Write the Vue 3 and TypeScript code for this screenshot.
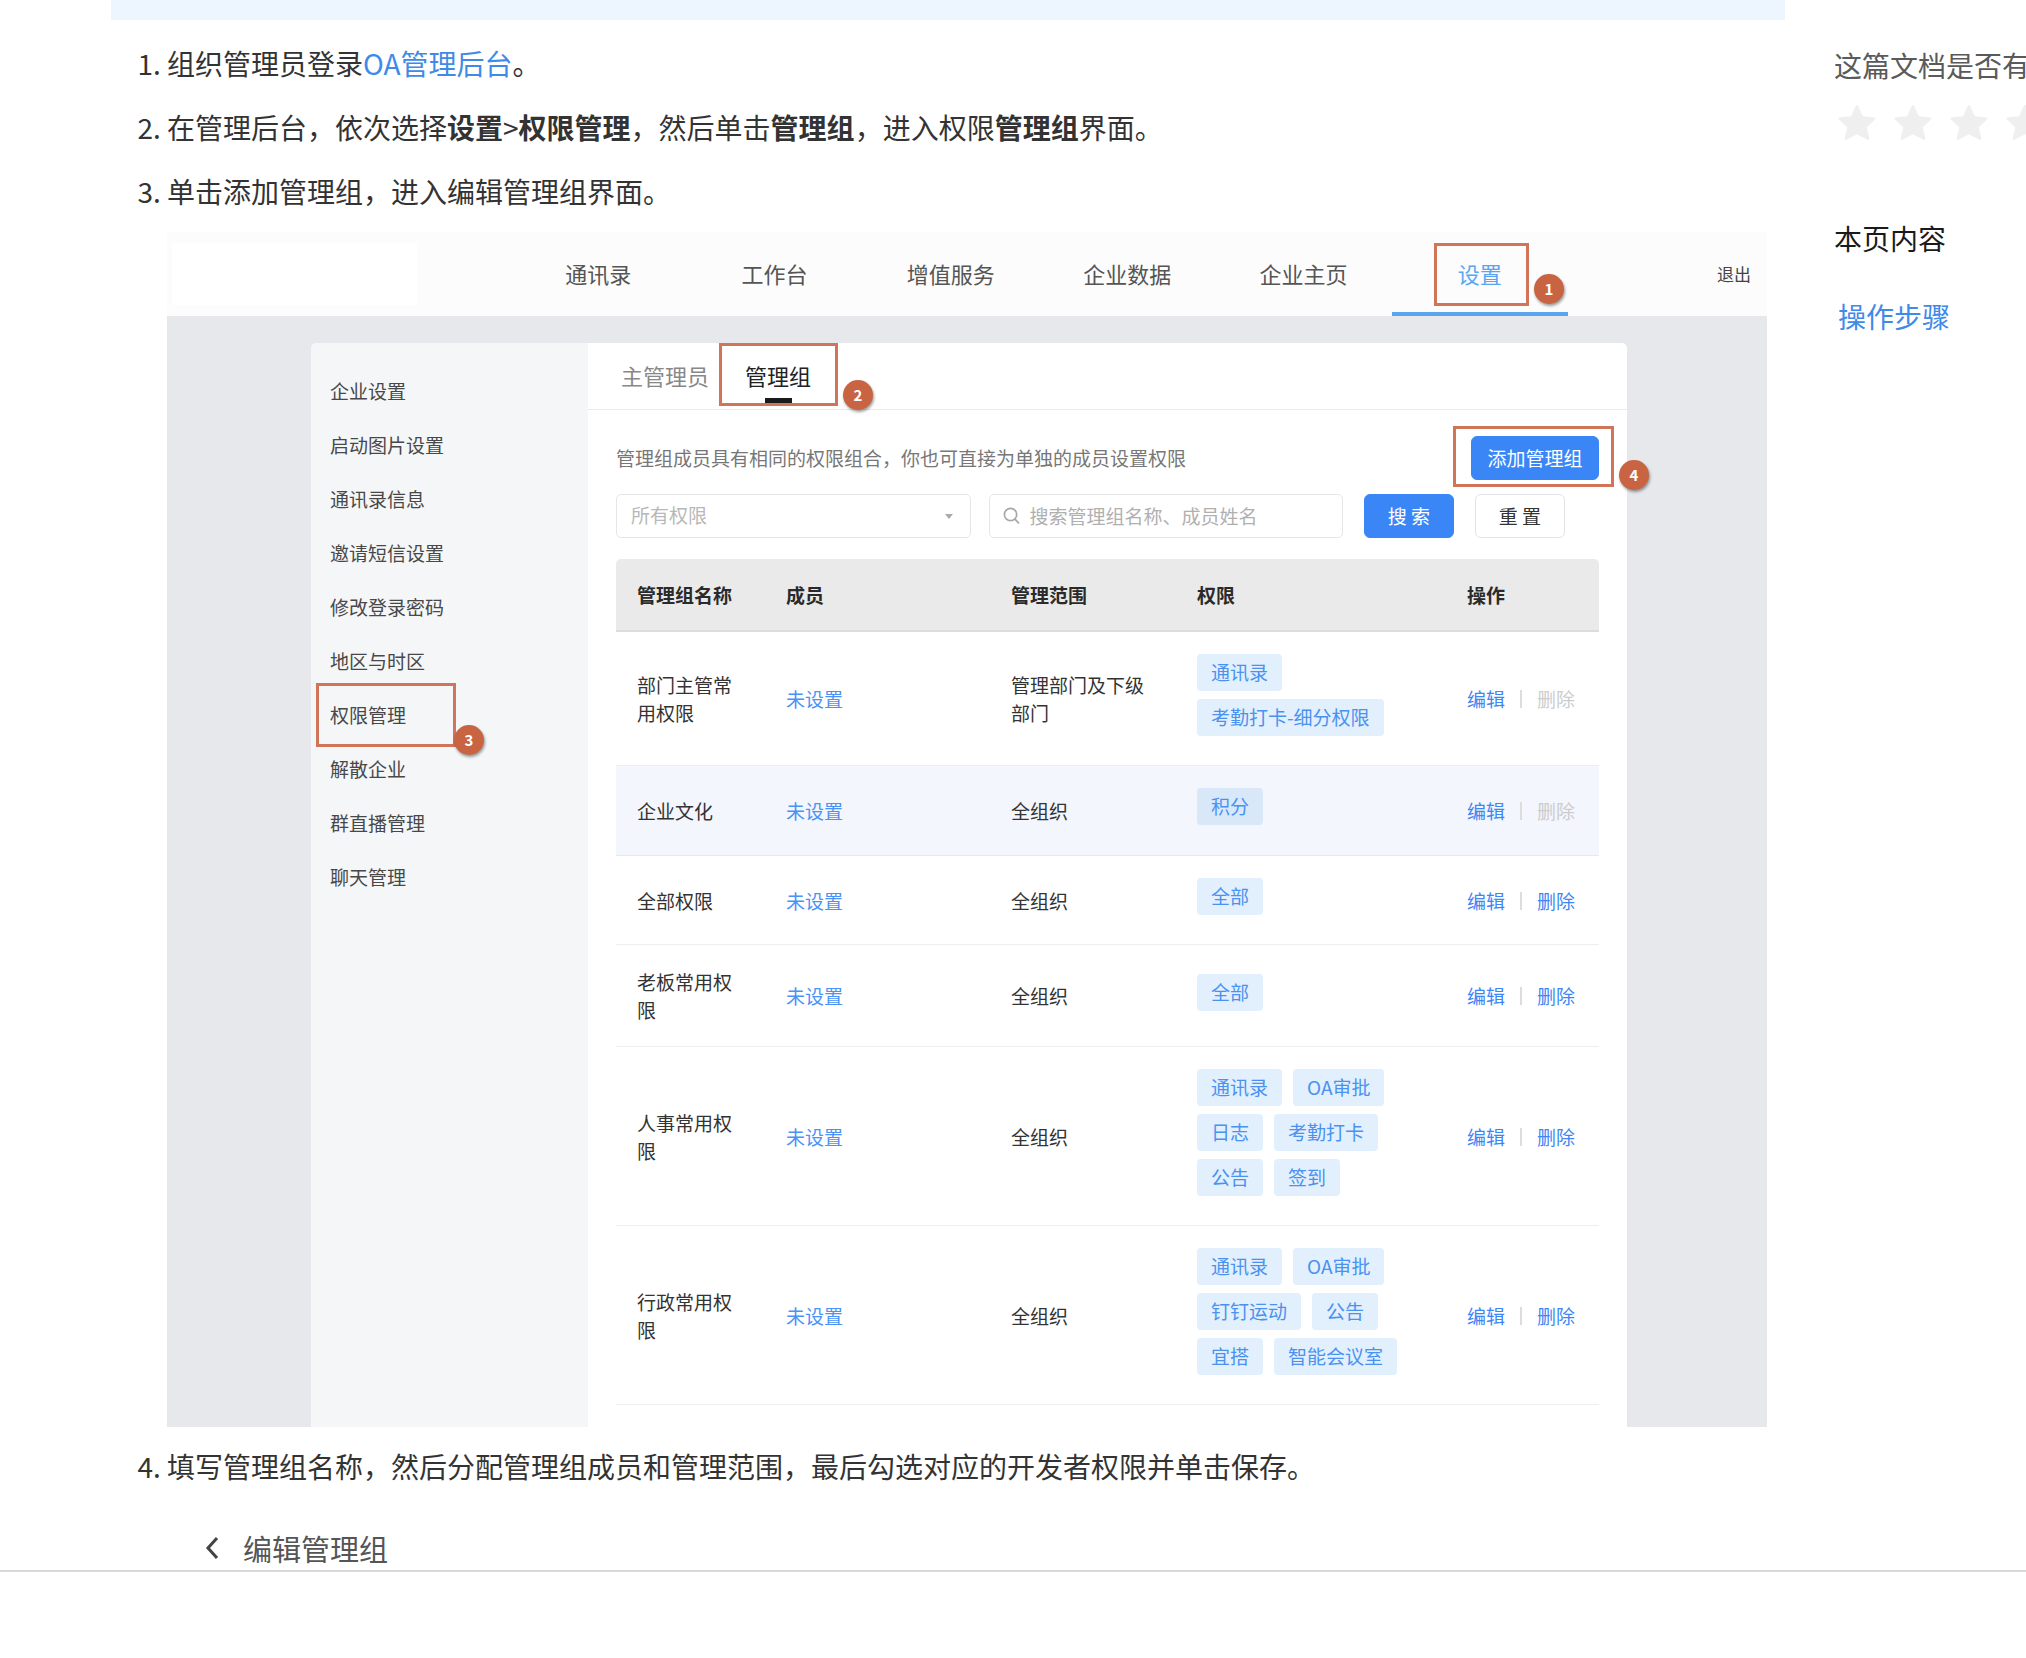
<script setup lang="ts">
import { ref } from 'vue'

interface Group {
  name: string
  scope: string
  tags: string[]
  locked?: boolean
  hovered?: boolean
}

const navItems: string[] = ['通讯录', '工作台', '增值服务', '企业数据', '企业主页', '设置']

const menuItems: string[] = [
  '企业设置',
  '启动图片设置',
  '通讯录信息',
  '邀请短信设置',
  '修改登录密码',
  '地区与时区',
  '权限管理',
  '解散企业',
  '群直播管理',
  '聊天管理',
]

const groups: Group[] = [
  { name: '部门主管常用权限', scope: '管理部门及下级部门', tags: ['通讯录', '考勤打卡-细分权限'], locked: true },
  { name: '企业文化', scope: '全组织', tags: ['积分'], locked: true, hovered: true },
  { name: '全部权限', scope: '全组织', tags: ['全部'] },
  { name: '老板常用权限', scope: '全组织', tags: ['全部'] },
  { name: '人事常用权限', scope: '全组织', tags: ['通讯录', 'OA审批', '日志', '考勤打卡', '公告', '签到'] },
  { name: '行政常用权限', scope: '全组织', tags: ['通讯录', 'OA审批', '钉钉运动', '公告', '宜搭', '智能会议室'] },
]

const permission = ref('all')
const keyword = ref('')
</script>

<template>
  <div class="page">
    <div class="scroll">
      <main class="article">
        <div class="notice"></div>
        <ol class="steps">
          <li>组织管理员登录<a href="#oa">OA管理后台</a>。</li>
          <li>在管理后台，依次选择<b>设置</b>&gt;<b>权限管理</b>，然后单击<b>管理组</b>，进入权限<b>管理组</b>界面。</li>
          <li>
            单击添加管理组，进入编辑管理组界面。
            <div class="console">
              <header class="topbar">
                <div class="brand"></div>
                <nav class="nav">
                  <a
                    v-for="item in navItems"
                    :key="item"
                    href="#nav"
                    class="nav-item"
                    :class="{ active: item === '设置' }"
                  >
                    {{ item }}
                    <template v-if="item === '设置'">
                      <span class="mark mark-nav"></span>
                      <span class="badge badge-nav">1</span>
                    </template>
                  </a>
                </nav>
                <a href="#logout" class="logout">退出</a>
              </header>

              <div class="body">
                <aside class="menu">
                  <a v-for="item in menuItems" :key="item" href="#menu" class="menu-item">
                    {{ item }}
                    <template v-if="item === '权限管理'">
                      <span class="mark mark-menu"></span>
                      <span class="badge badge-menu">3</span>
                    </template>
                  </a>
                </aside>

                <section class="panel">
                  <div class="tabs">
                    <button type="button" class="tab">主管理员</button>
                    <button type="button" class="tab current">
                      管理组
                      <span class="mark mark-tab"></span>
                      <span class="badge badge-tab">2</span>
                    </button>
                  </div>

                  <div class="content">
                    <div class="intro">
                      <span>管理组成员具有相同的权限组合，你也可直接为单独的成员设置权限</span>
                      <div class="add">
                        <button type="button" class="btn primary wide">添加管理组</button>
                        <span class="mark mark-add"></span>
                        <span class="badge badge-add">4</span>
                      </div>
                    </div>

                    <form class="filters" @submit.prevent>
                      <div class="field">
                        <select v-model="permission" aria-label="权限">
                          <option value="all">所有权限</option>
                        </select>
                        <svg class="caret" viewBox="0 0 8 5" aria-hidden="true"><path d="M0 0h8L4 5z" fill="#aaa" /></svg>
                      </div>
                      <div class="field">
                        <svg class="lens" viewBox="0 0 18 18" aria-hidden="true">
                          <circle cx="8" cy="8" r="6.5" fill="none" stroke="#a8a8a8" stroke-width="1.8" />
                          <path d="M12.6 12.8l3.8 4" stroke="#a8a8a8" stroke-width="1.8" stroke-linecap="round" />
                        </svg>
                        <input v-model="keyword" type="text" aria-label="搜索" placeholder="搜索管理组名称、成员姓名" />
                      </div>
                      <button type="submit" class="btn primary">搜 索</button>
                      <button type="reset" class="btn">重 置</button>
                    </form>

                    <table class="grid">
                      <colgroup>
                        <col class="c-name" />
                        <col class="c-member" />
                        <col class="c-scope" />
                        <col />
                        <col class="c-ops" />
                      </colgroup>
                      <thead>
                        <tr>
                          <th>管理组名称</th>
                          <th>成员</th>
                          <th>管理范围</th>
                          <th>权限</th>
                          <th>操作</th>
                        </tr>
                      </thead>
                      <tbody>
                        <tr v-for="group in groups" :key="group.name" :class="{ hovered: group.hovered }">
                          <td>{{ group.name }}</td>
                          <td><a href="#member">未设置</a></td>
                          <td>{{ group.scope }}</td>
                          <td>
                            <div class="tags">
                              <span v-for="tag in group.tags" :key="tag" class="tag">{{ tag }}</span>
                            </div>
                          </td>
                          <td>
                            <div class="ops">
                              <button type="button">编辑</button>
                              <i></i>
                              <button type="button" :disabled="group.locked">删除</button>
                            </div>
                          </td>
                        </tr>
                      </tbody>
                    </table>
                  </div>
                </section>
              </div>
            </div>
          </li>
          <li>
            填写管理组名称，然后分配管理组成员和管理范围，最后勾选对应的开发者权限并单击保存。
            <div class="editor">
              <svg viewBox="0 0 14 24" aria-hidden="true">
                <path d="M12 2L3 12l9 10" fill="none" stroke="#444" stroke-width="3" />
              </svg>
              <span>编辑管理组</span>
            </div>
          </li>
        </ol>
      </main>

      <aside class="side">
        <p class="question">这篇文档是否有帮助？</p>
        <div class="stars">
          <button v-for="n in 5" :key="n" type="button" :aria-label="`${n} 星`">
            <svg viewBox="0 0 38 36" aria-hidden="true">
              <path
                d="M19 2l5 11 12.500 1.500-9 8.500 3 12L19 29 7.500 35l3-12-9-8.500L14 13z"
                fill="#efefef"
                stroke="#efefef"
                stroke-width="2"
                stroke-linejoin="round"
              />
            </svg>
          </button>
        </div>
        <h2>本页内容</h2>
        <a href="#steps" class="toc">操作步骤</a>
      </aside>
    </div>
    <footer class="footer"></footer>
  </div>
</template>

<style>
body {
  margin: 0;
  background: #fff;
}
</style>

<style scoped>
.page,
.page * {
  box-sizing: border-box;
}

.page {
  display: flex;
  flex-direction: column;
  height: 100vh;
  overflow: hidden;
  font-family: "Noto Sans CJK SC", "Noto Sans", sans-serif;
  font-size: 28px;
  color: #333;
}

a {
  color: #3f8ae8;
  text-decoration: none;
}

button,
input,
select {
  font: inherit;
  margin: 0;
}

button {
  padding: 0;
  border: 0;
  background: none;
  white-space: nowrap;
}

.scroll {
  display: flex;
  flex: 1;
  gap: 49px;
  min-height: 0;
  padding-left: 111px;
  overflow: hidden;
}

.article {
  flex: 1;
  min-width: 0;
}

.notice {
  height: 20px;
  background: #edf6fe;
}

.steps {
  margin: 11px 18px 0 0;
  padding-left: 56px;
  line-height: 64px;
}

.footer {
  flex: 0 0 88px;
  border-top: 2px solid #d9d9d9;
}

/* admin console */
.console {
  margin: 9px 0 7px;
  background: #e6e8ec;
  font-size: 19px;
  line-height: 28px;
}

.topbar {
  display: grid;
  grid-template-columns: 343fr 1058fr 199fr;
  align-items: center;
  height: 84px;
  background: #fcfcfc;
}

.brand {
  width: 245px;
  height: 62px;
  margin-left: 5px;
  background: #fff;
}

.nav {
  display: flex;
  height: 100%;
}

.nav-item {
  position: relative;
  display: flex;
  flex: 1;
  align-items: center;
  justify-content: center;
  padding-bottom: 2px;
  font-size: 22px;
  color: #555;
}

.nav-item.active {
  padding: 2px 0 0;
  border-bottom: 4px solid #5aa5ee;
  color: #5aa5f3;
}

.logout {
  justify-self: end;
  margin-right: 16px;
  font-size: 17px;
  color: #444;
}

.body {
  display: flex;
  padding: 27px 8.75% 0 9%;
}

.menu {
  flex: 0 0 277px;
  padding-top: 21px;
  background: #f4f6f8;
  border-top-left-radius: 5px;
}

.menu-item {
  position: relative;
  display: block;
  padding-left: 19px;
  line-height: 54px;
  color: #484848;
}

.panel {
  flex: 1;
  min-width: 0;
  background: #fff;
  border-top-right-radius: 5px;
}

.tabs {
  display: flex;
  gap: 36px;
  height: 67px;
  padding-left: 33px;
  border-bottom: 1px solid #e8eaec;
}

.tab {
  position: relative;
  padding-bottom: 2px;
  font-size: 22px;
  color: #888;
}

.tab.current {
  color: #222;
}

.tab.current::after {
  content: "";
  position: absolute;
  left: 50%;
  bottom: 6px;
  width: 27px;
  height: 5px;
  margin-left: -13px;
  background: #1a1a1a;
}

.content {
  padding: 26px 28px 22px;
}

.intro {
  display: flex;
  align-items: center;
  justify-content: space-between;
  color: #777;
}

.add {
  position: relative;
}

.btn {
  width: 90px;
  height: 44px;
  padding-bottom: 1px;
  border: 1px solid #e2e5e8;
  border-radius: 6px;
  background: #fff;
  color: #333;
}

.btn.primary {
  border-color: #3a86f7;
  background: #3a86f7;
  color: #fff;
}

.btn.wide {
  display: block;
  width: 128px;
}

.filters {
  display: flex;
  gap: 21px;
  margin: 14px 34px 21px 0;
}

.field {
  position: relative;
  flex: 1;
}

.field:first-child {
  margin-right: -3px;
}

.field select,
.field input {
  display: block;
  width: 100%;
  height: 44px;
  padding: 0 14px 2px;
  border: 1px solid #e4e7ea;
  border-radius: 5px;
  background: #fff;
  color: #b8b8b8;
  appearance: none;
  outline: 0;
}

.field input {
  padding-left: 40px;
}

.field input::placeholder {
  color: #b0b0b0;
  opacity: 1;
}

.caret {
  position: absolute;
  right: 18px;
  top: 20px;
  width: 8px;
  height: 5px;
}

.lens {
  position: absolute;
  left: 14px;
  top: 13px;
  width: 17px;
  height: 17px;
}

.grid {
  width: 100%;
  table-layout: fixed;
  border-collapse: separate;
  border-spacing: 0;
}

.c-name {
  width: 149px;
}

.c-member {
  width: 225px;
}

.c-scope {
  width: 186px;
}

.c-ops {
  width: 153px;
}

th {
  height: 73px;
  padding: 0 21px;
  background: #eaeaea;
  border-bottom: 2px solid #dcdcdc;
  text-align: left;
  font-weight: 700;
  color: #2a2a2a;
}

th:first-child {
  border-top-left-radius: 5px;
}

th:last-child {
  border-top-right-radius: 5px;
}

td {
  padding: 22px 21px 21px;
  border-bottom: 1px solid #eceef0;
  vertical-align: middle;
}

td:first-child {
  padding: 23px 21px 22px;
}

td:last-child {
  padding-right: 0;
}

td a {
  color: #4a92f5;
}

.hovered td {
  padding-bottom: 22px;
  background: #f3f6fc;
  border-bottom-color: #e4e9f0;
}

.tags {
  display: flex;
  flex-wrap: wrap;
  column-gap: 11px;
}

.tag {
  height: 37px;
  margin-bottom: 8px;
  padding: 0 14px;
  border-radius: 4px;
  background: #e2effd;
  color: #4a92f0;
  line-height: 36px;
}

.hovered .tag {
  background: #d9e8f9;
}

.ops {
  display: flex;
  align-items: center;
  gap: 15px;
}

.ops button {
  color: #3f86f5;
}

.ops button:disabled {
  color: #ccc;
}

.ops i {
  width: 2px;
  height: 18px;
  background: #ddd;
}

/* numbered callouts */
.mark {
  position: absolute;
  border: 3px solid #d07559;
}

.badge {
  position: absolute;
  width: 30px;
  height: 30px;
  border-radius: 50%;
  background: #c86442;
  box-shadow: 1px 2px 3px rgba(0, 0, 0, 0.4);
  color: #fff;
  font-size: 15px;
  font-weight: 700;
  line-height: 30px;
  text-align: center;
}

.mark-nav {
  inset: 11px 39px 6px 42px;
}

.badge-nav {
  right: 4px;
  top: 42px;
}

.mark-menu {
  left: 5px;
  top: -5px;
  width: 140px;
  height: 64px;
}

.badge-menu {
  left: 143px;
  top: 37px;
}

.mark-tab {
  inset: 0 -27px 3px -26px;
}

.badge-tab {
  right: -62px;
  top: 37px;
}

.mark-add {
  inset: -10px -15px -7px -18px;
  pointer-events: none;
}

.badge-add {
  right: -50px;
  top: 24px;
}

/* second figure */
.editor {
  display: flex;
  align-items: center;
  gap: 24px;
  height: 84px;
  margin-top: 8px;
  padding-left: 38px;
  font-size: 29px;
  line-height: 40px;
  color: #555;
}

.editor svg {
  width: 14px;
  height: 24px;
}

/* right column */
.side {
  flex: 0 0 192px;
  overflow: hidden;
  white-space: nowrap;
  line-height: 40px;
}

.question {
  margin: 45px 0 19px;
  color: #5a5a5a;
}

.stars {
  display: flex;
  gap: 18px;
  padding-left: 4px;
}

.stars button {
  flex: 0 0 38px;
}

.stars svg {
  display: block;
  width: 38px;
  height: 36px;
}

.side h2 {
  margin: 78px 0 38px;
  font-size: 28px;
  font-weight: 400;
  color: #1a1a1a;
}

.toc {
  display: block;
  padding-left: 4px;
}
</style>
